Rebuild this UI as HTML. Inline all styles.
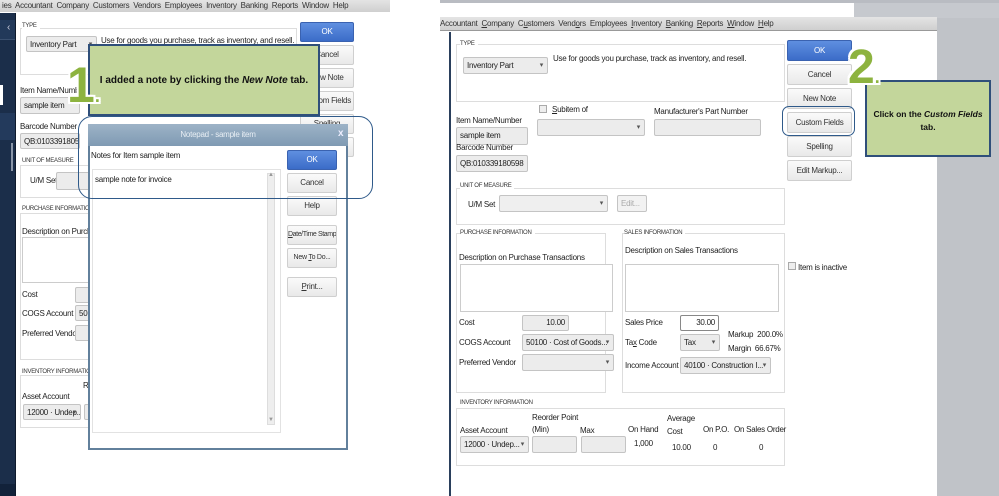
<!DOCTYPE html>
<html><head><meta charset="utf-8"><style>
*{margin:0;padding:0;box-sizing:border-box}
body{width:999px;height:496px;overflow:hidden;background:#fff;position:relative;font-family:"Liberation Sans",sans-serif;font-size:8px;letter-spacing:-0.25px;color:#222}
.a{position:absolute;white-space:nowrap}
.menu{background:linear-gradient(#e4e4e4,#cfcfcf);color:#333;font-size:8px;padding-left:2px;line-height:13px}
.box{position:absolute;border:1px solid #ddd;background:#fff}
.lbl{position:absolute;font-size:6px;color:#333;white-space:nowrap;background:#fff;padding-right:3px}
.fld{position:absolute;background:#ececec;border:1px solid #c4c4c4;border-radius:2px;font-size:8px;line-height:15px;padding-left:3px;white-space:nowrap;overflow:hidden}
.dd::after{content:"▾";position:absolute;right:4px;top:0;font-size:7px;color:#555}
.btn{position:absolute;background:linear-gradient(#fafafa,#e9e9e9);border:1px solid #cfcfcf;border-radius:2px;text-align:center;font-size:8px;color:#333;white-space:nowrap;overflow:hidden}
.ok{background:linear-gradient(#5f8fe0,#3b6cc8);border-color:#3a62b0;color:#fff}
.callout{position:absolute;background:#c3d69b;border:2px solid #2f4f7a;font-family:"Liberation Sans",sans-serif;font-weight:bold;font-size:10px;letter-spacing:0;text-align:center;color:#111;white-space:nowrap}
.big{position:absolute;font-family:"Liberation Sans",sans-serif;font-weight:bold;color:#8db33f;letter-spacing:0;text-shadow:-2px 0 #fff,2px 0 #fff,0 -2px #fff,0 2px #fff,2px 2px #fff,-2px -2px #fff,2px -2px #fff,-2px 2px #fff;line-height:1}
.hl{position:absolute;border:1.5px solid #2f5a8a;border-radius:14px}
.cb{position:absolute;width:8px;height:8px;border:1px solid #aaa;background:#eee}
</style></head><body>

<div class="a menu" style="left:0;top:0;width:390px;height:12px;line-height:11px">ies&nbsp; Accountant&nbsp; Company&nbsp; Customers&nbsp; Vendors&nbsp; Employees&nbsp; Inventory&nbsp; Banking&nbsp; Reports&nbsp; Window&nbsp; Help</div>
<div class="a" style="left:0;top:13px;width:15px;height:483px;background:#1b2e4a"></div>
<div class="a" style="left:0;top:20px;width:15px;height:20px;background:#22395a;border-bottom:1px solid #3a5070"></div>
<div class="a" style="left:7px;top:22px;color:#ccd;font-size:10px">‹</div>
<div class="a" style="left:0;top:85px;width:3px;height:20px;background:#fff"></div>
<div class="a" style="left:0;top:113px;width:15px;height:27px;background:#233a5c"></div>
<div class="a" style="left:11px;top:143px;width:2px;height:28px;background:#8a96a8"></div>
<div class="a" style="left:0;top:484px;width:15px;height:12px;background:#12223a"></div>
<div class="a" style="left:15px;top:13px;width:1px;height:483px;background:#0e1a2c"></div>

<div class="box" style="left:20px;top:28px;width:277px;height:47px"></div>
<div class="lbl" style="left:22px;top:23px">TYPE</div>
<div class="fld dd" style="left:26px;top:36px;width:71px;height:16px">Inventory Part</div>
<div class="a" style="left:101px;top:36px">Use for goods you purchase, track as inventory, and resell.</div>
<div class="a" style="left:20px;top:86px">Item Name/Number</div>
<div class="fld" style="left:20px;top:97px;width:60px;height:17px">sample item</div>
<div class="a" style="left:20px;top:122px">Barcode Number</div>
<div class="fld" style="left:20px;top:133px;width:60px;height:16px">QB:010339180598</div>
<div class="box" style="left:20px;top:165px;width:70px;height:33px"></div>
<div class="lbl" style="left:22px;top:158px">UNIT OF MEASURE</div>
<div class="a" style="left:30px;top:176px">U/M Set</div>
<div class="fld" style="left:56px;top:172px;width:40px;height:18px"></div>
<div class="box" style="left:20px;top:213px;width:70px;height:147px"></div>
<div class="lbl" style="left:22px;top:206px">PURCHASE INFORMATION</div>
<div class="a" style="left:22px;top:227px">Description on Purchase</div>
<div class="box" style="left:22px;top:237px;width:70px;height:46px;border-color:#ccc"></div>
<div class="a" style="left:22px;top:290px">Cost</div>
<div class="fld" style="left:75px;top:287px;width:20px;height:16px"></div>
<div class="a" style="left:22px;top:309px">COGS Account</div>
<div class="fld" style="left:75px;top:305px;width:20px;height:16px">501</div>
<div class="a" style="left:22px;top:329px">Preferred Vendor</div>
<div class="fld" style="left:75px;top:325px;width:20px;height:16px"></div>
<div class="box" style="left:20px;top:375px;width:70px;height:53px"></div>
<div class="lbl" style="left:22px;top:369px">INVENTORY INFORMATION</div>
<div class="a" style="left:22px;top:392px">Asset Account</div>
<div class="a" style="left:83px;top:381px">R</div>
<div class="fld dd" style="left:23px;top:404px;width:58px;height:16px">12000 · Undep...</div>
<div class="fld" style="left:84px;top:404px;width:10px;height:16px"></div>

<div class="btn ok" style="left:300px;top:22px;width:54px;height:20px;line-height:18px">OK</div>
<div class="btn" style="left:300px;top:45px;width:54px;height:20px;line-height:18px">Cancel</div>
<div class="btn" style="left:300px;top:68px;width:54px;height:20px;line-height:18px">New Note</div>
<div class="btn" style="left:300px;top:91px;width:54px;height:20px;line-height:18px">Custom Fields</div>
<div class="btn" style="left:300px;top:114px;width:54px;height:20px;line-height:18px">Spelling</div>
<div class="btn" style="left:300px;top:137px;width:54px;height:20px"></div>

<div class="callout" style="left:88px;top:44px;width:232px;height:72px;padding-top:29px">I added a note by clicking the <i>New Note</i> tab.</div>
<div class="big" style="left:67px;top:60px;font-size:50px">1<span style="font-size:18px">.</span></div>

<div class="a" style="left:88px;top:124px;width:260px;height:326px;background:#fff;border:2px solid #62809c;border-top:none"></div>
<div class="a" style="left:88px;top:124px;width:260px;height:22px;background:linear-gradient(#9db3c7,#7f9ab3);color:#e8eef4;font-size:8px;text-align:center;line-height:22px">Notepad - sample item</div>
<div class="a" style="left:338px;top:128px;color:#eef;font-size:10px;font-weight:bold">x</div>
<div class="a" style="left:91px;top:151px">Notes for Item sample item</div>
<div class="a" style="left:92px;top:169px;width:189px;height:264px;border:1px solid #e2e2e2"></div>
<div class="a" style="left:95px;top:175px">sample note for invoice</div>
<div class="a" style="left:267px;top:173px;width:8px;height:252px;background:#eee;border:1px solid #ddd"></div>
<div class="a" style="left:268px;top:172px;font-size:6px;color:#999">▲</div>
<div class="a" style="left:268px;top:417px;font-size:6px;color:#999">▼</div>
<div class="btn ok" style="left:287px;top:150px;width:50px;height:20px;line-height:18px">OK</div>
<div class="btn" style="left:287px;top:173px;width:50px;height:20px;line-height:18px">Cancel</div>
<div class="btn" style="left:287px;top:196px;width:50px;height:20px;line-height:18px">Help</div>
<div class="btn" style="left:287px;top:225px;width:50px;height:20px;line-height:18px;font-size:7px;letter-spacing:-0.4px"><u>D</u>ate/Time Stamp</div>
<div class="btn" style="left:287px;top:248px;width:50px;height:20px;line-height:18px;font-size:7px">New <u>T</u>o Do...</div>
<div class="btn" style="left:287px;top:277px;width:50px;height:20px;line-height:18px"><u>P</u>rint...</div>
<div class="hl" style="left:78px;top:116px;width:295px;height:83px"></div>

<div class="a" style="left:440px;top:0;width:559px;height:3px;background:#b9bcc2"></div>
<div class="a" style="left:854px;top:3px;width:145px;height:15px;background:#c6c9ce"></div>
<div class="a" style="left:937px;top:18px;width:62px;height:478px;background:#c0c3c8"></div>
<div class="a menu" style="left:440px;top:17px;width:497px;height:14px;padding-left:0;line-height:13px;border-bottom:1px solid #999">Accountant&nbsp; <u>C</u>ompany&nbsp; C<u>u</u>stomers&nbsp; Vend<u>o</u>rs&nbsp; Employees&nbsp; <u>I</u>nventory&nbsp; <u>B</u>anking&nbsp; <u>R</u>eports&nbsp; <u>W</u>indow&nbsp; <u>H</u>elp</div>
<div class="a" style="left:449px;top:32px;width:2px;height:464px;background:#2a3f5c"></div>

<div class="box" style="left:456px;top:44px;width:329px;height:58px"></div>
<div class="lbl" style="left:460px;top:41px">TYPE</div>
<div class="fld dd" style="left:463px;top:57px;width:85px;height:17px">Inventory Part</div>
<div class="a" style="left:553px;top:54px">Use for goods you purchase, track as inventory, and resell.</div>
<div class="a" style="left:456px;top:116px">Item Name/Number</div>
<div class="fld" style="left:456px;top:127px;width:72px;height:18px;line-height:16px">sample item</div>
<div class="cb" style="left:539px;top:105px"></div>
<div class="a" style="left:552px;top:105px"><u>S</u>ubitem of</div>
<div class="fld dd" style="left:537px;top:119px;width:108px;height:17px"></div>
<div class="a" style="left:654px;top:107px">Manufacturer's Part Number</div>
<div class="fld" style="left:654px;top:119px;width:107px;height:17px"></div>
<div class="a" style="left:456px;top:143px">Barcode Number</div>
<div class="fld" style="left:456px;top:155px;width:72px;height:17px">QB:010339180598</div>

<div class="box" style="left:456px;top:188px;width:329px;height:37px"></div>
<div class="lbl" style="left:460px;top:183px">UNIT OF MEASURE</div>
<div class="a" style="left:468px;top:200px">U/M Set</div>
<div class="fld dd" style="left:499px;top:195px;width:109px;height:17px;background:#efefef"></div>
<div class="fld" style="left:617px;top:195px;width:30px;height:17px;color:#aaa;background:#f2f2f2">Edit...</div>

<div class="box" style="left:456px;top:233px;width:150px;height:160px"></div>
<div class="lbl" style="left:460px;top:230px">PURCHASE INFORMATION</div>
<div class="box" style="left:622px;top:233px;width:163px;height:160px"></div>
<div class="lbl" style="left:624px;top:230px">SALES INFORMATION</div>
<div class="a" style="left:459px;top:253px">Description on Purchase Transactions</div>
<div class="box" style="left:460px;top:264px;width:153px;height:48px;border-color:#ccc"></div>
<div class="a" style="left:625px;top:246px">Description on Sales Transactions</div>
<div class="box" style="left:625px;top:264px;width:154px;height:48px;border-color:#ccc"></div>
<div class="a" style="left:459px;top:318px">Cost</div>
<div class="fld" style="left:522px;top:315px;width:47px;height:16px;text-align:right;padding-right:3px;line-height:14px">10.00</div>
<div class="a" style="left:459px;top:338px">COGS Account</div>
<div class="fld dd" style="left:522px;top:334px;width:92px;height:17px;padding-right:12px">50100 · Cost of Goods...</div>
<div class="a" style="left:459px;top:358px">Preferred Vendor</div>
<div class="fld dd" style="left:522px;top:354px;width:92px;height:17px"></div>
<div class="a" style="left:625px;top:318px">Sales Price</div>
<div class="fld" style="left:680px;top:315px;width:39px;height:16px;background:#fff;border-color:#888;text-align:right;padding-right:3px;line-height:14px">30.00</div>
<div class="a" style="left:625px;top:338px">Ta<u>x</u> Code</div>
<div class="fld dd" style="left:680px;top:334px;width:40px;height:17px">Tax</div>
<div class="a" style="left:728px;top:330px">Markup&nbsp; 200.0%</div>
<div class="a" style="left:728px;top:344px">Margin&nbsp; 66.67%</div>
<div class="a" style="left:625px;top:361px">Income Account</div>
<div class="fld dd" style="left:680px;top:357px;width:91px;height:17px;padding-right:12px">40100 · Construction I...</div>
<div class="cb" style="left:788px;top:262px"></div>
<div class="a" style="left:798px;top:263px">Item is inactive</div>

<div class="box" style="left:456px;top:408px;width:329px;height:58px"></div>
<div class="lbl" style="left:460px;top:400px">INVENTORY INFORMATION</div>
<div class="a" style="left:532px;top:413px">Reorder Point</div>
<div class="a" style="left:532px;top:425px">(Min)</div>
<div class="a" style="left:460px;top:426px">Asset Account</div>
<div class="a" style="left:580px;top:426px">Max</div>
<div class="a" style="left:628px;top:425px">On Hand</div>
<div class="a" style="left:667px;top:414px">Average</div>
<div class="a" style="left:667px;top:427px">Cost</div>
<div class="a" style="left:703px;top:425px">On P.O.</div>
<div class="a" style="left:734px;top:425px">On Sales Order</div>
<div class="fld dd" style="left:460px;top:436px;width:69px;height:17px;padding-right:12px">12000 · Undep...</div>
<div class="fld" style="left:532px;top:436px;width:45px;height:17px"></div>
<div class="fld" style="left:581px;top:436px;width:45px;height:17px"></div>
<div class="a" style="left:634px;top:439px">1,000</div>
<div class="a" style="left:672px;top:443px">10.00</div>
<div class="a" style="left:713px;top:443px">0</div>
<div class="a" style="left:759px;top:443px">0</div>

<div class="btn ok" style="left:787px;top:40px;width:65px;height:21px;line-height:19px">OK</div>
<div class="btn" style="left:787px;top:64px;width:65px;height:21px;line-height:19px">Cancel</div>
<div class="btn" style="left:787px;top:88px;width:65px;height:21px;line-height:19px">New Note</div>
<div class="btn" style="left:787px;top:112px;width:65px;height:21px;line-height:19px">Custom Fields</div>
<div class="btn" style="left:787px;top:136px;width:65px;height:21px;line-height:19px">Spelling</div>
<div class="btn" style="left:787px;top:160px;width:65px;height:21px;line-height:19px">Edit Markup...</div>
<div class="hl" style="left:782px;top:106px;width:73px;height:30px;border-radius:7px"></div>

<div class="callout" style="left:865px;top:80px;width:126px;height:77px;padding-top:26px;line-height:13px;font-size:8.5px">Click on the <i>Custom Fields</i><br>tab.</div>
<div class="big" style="left:848px;top:44px;font-size:48px">2<span style="font-size:18px">.</span></div>
</body></html>
